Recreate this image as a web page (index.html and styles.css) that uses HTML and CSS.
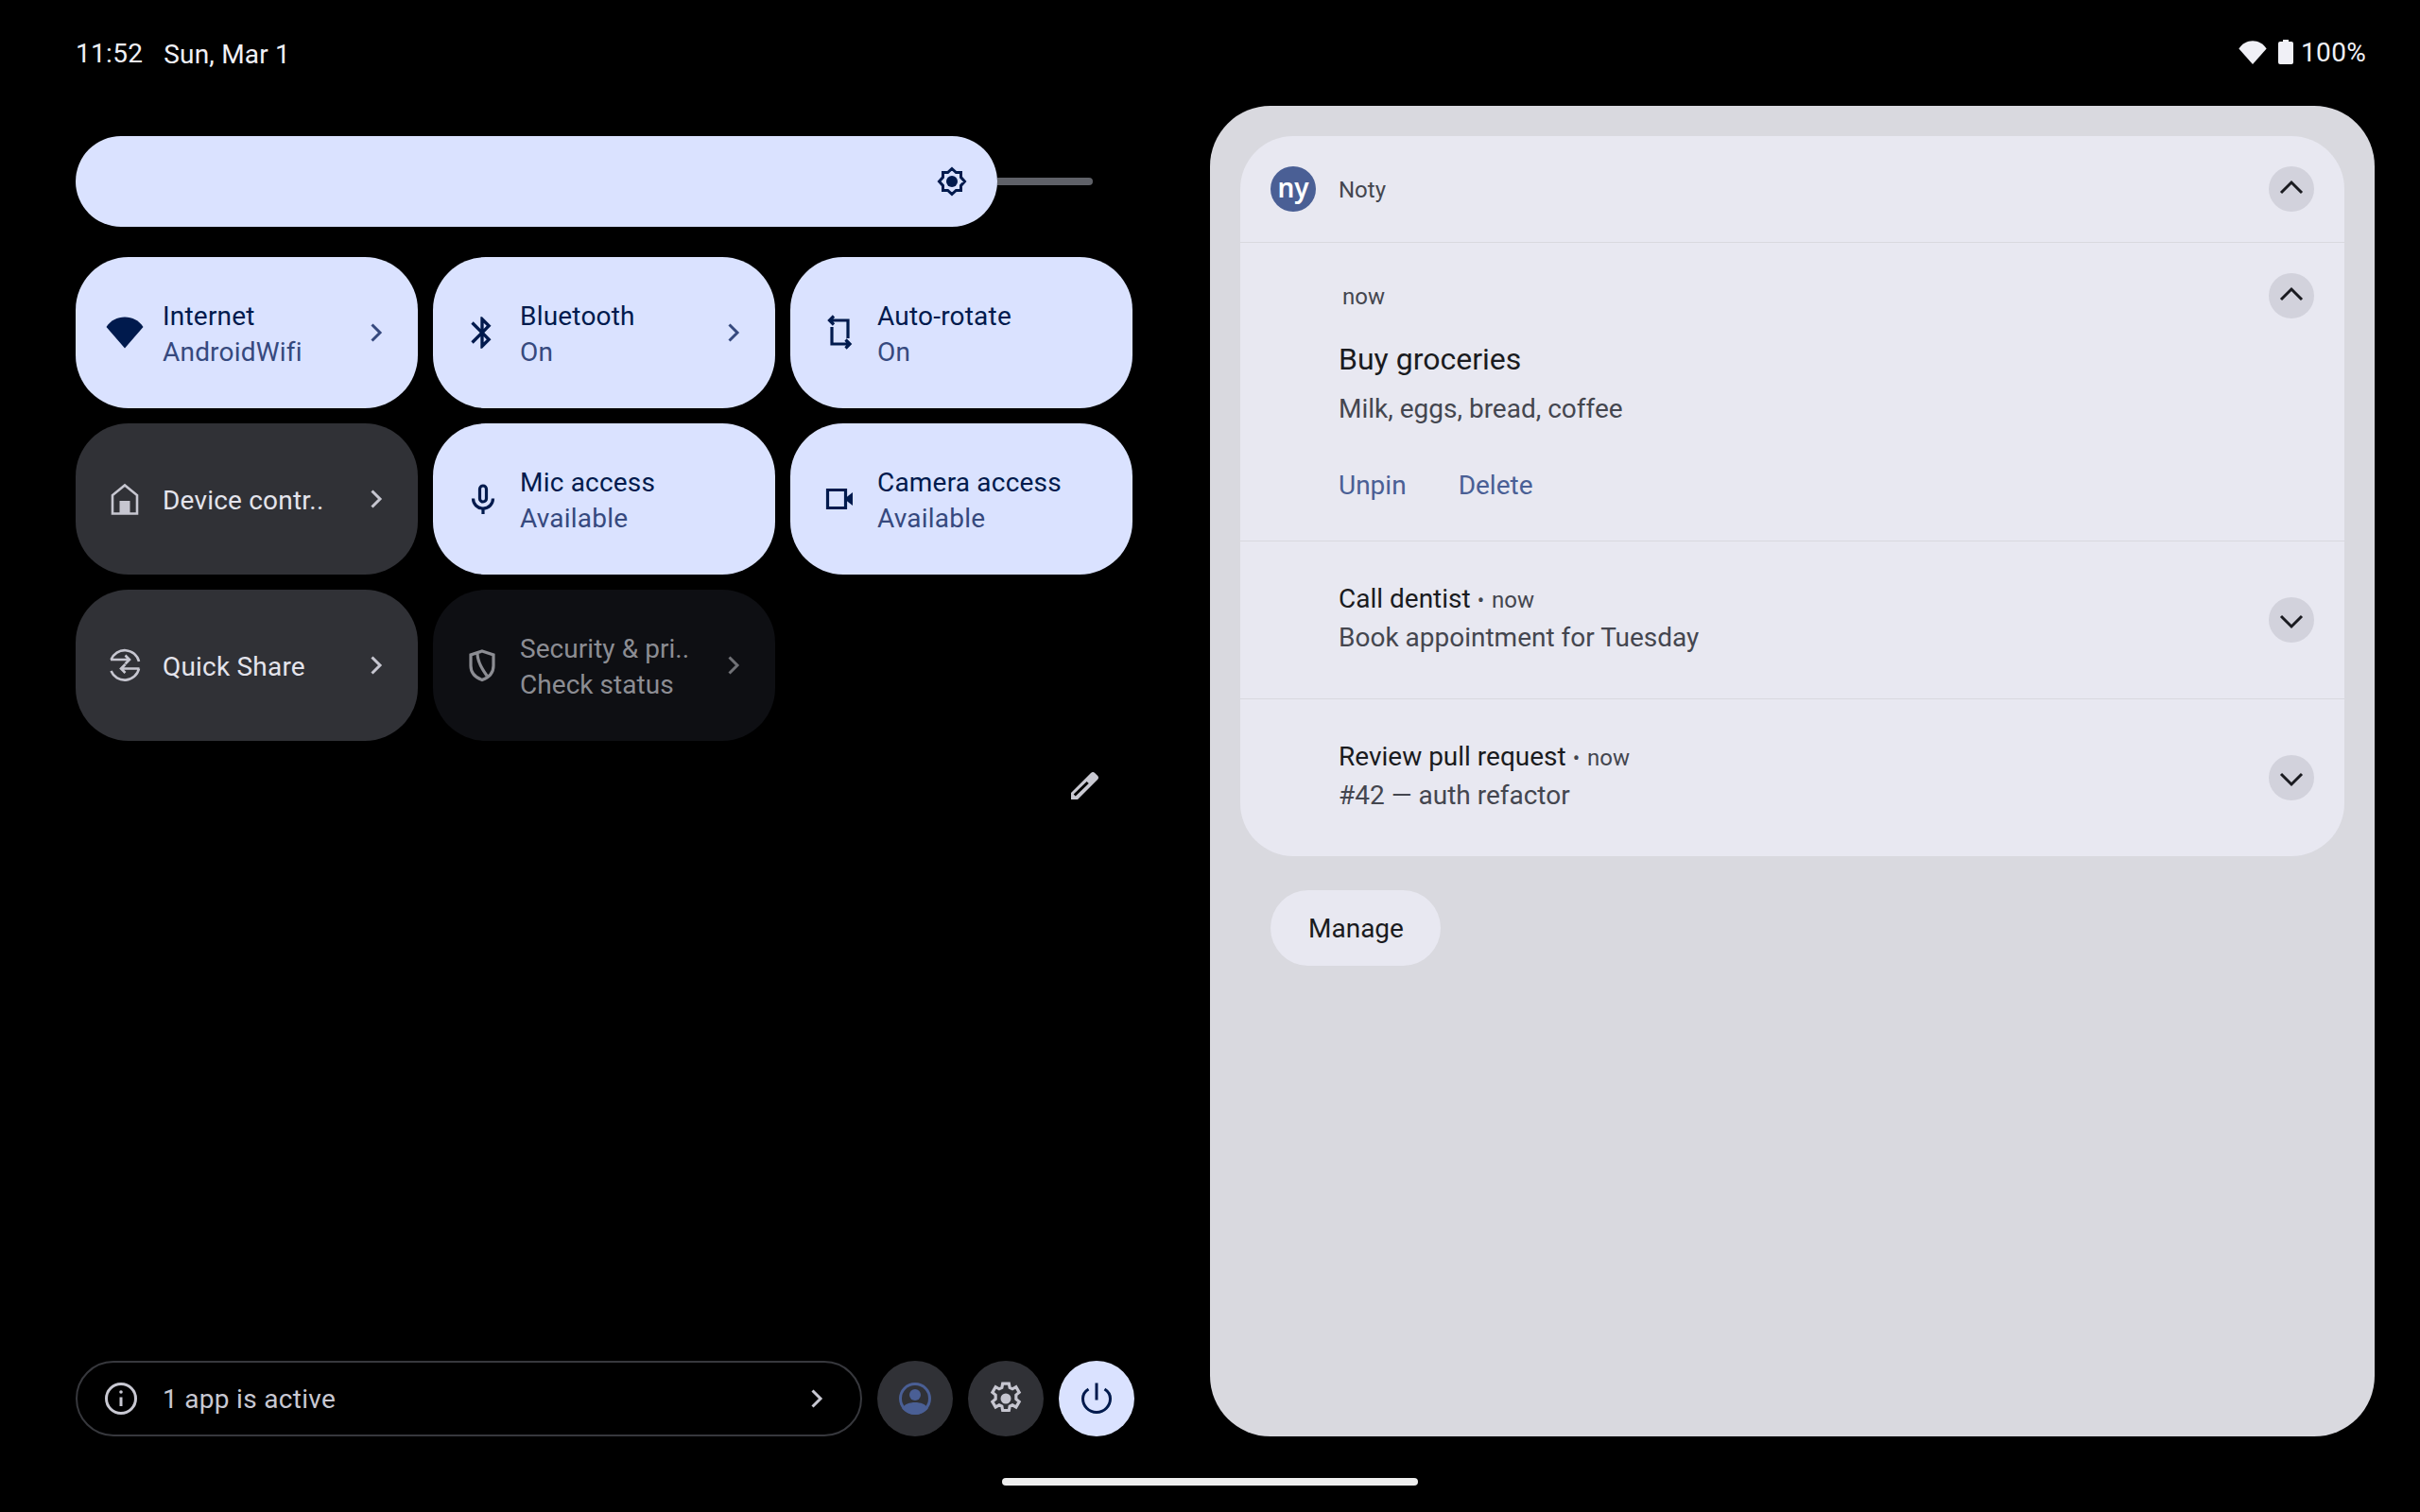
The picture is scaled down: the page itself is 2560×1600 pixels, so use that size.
FILE: index.html
```html
<!DOCTYPE html>
<html lang="en">
<head>
    <meta charset="UTF-8">
    <title>Quick settings</title>
    <link rel="stylesheet" href="styles.css">
</head>
<body>
    <div class="screen">
        <div class="status-bar">
            <div class="clock">
                <span class="time">11:52</span>
                <span class="date">Sun, Mar 1</span>
            </div>
            <div class="status-icons">
                <svg class="st-wifi" width="30" height="25" viewBox="0 0 40 33"><path d="M20 33L.5 11C5 4 12 0 20 0s15 4 19.5 11z"/></svg>
                <svg class="st-battery" width="16" height="26" viewBox="0 0 16 26"><path d="M5 0h6v2h3a2 2 0 0 1 2 2v20a2 2 0 0 1-2 2H2a2 2 0 0 1-2-2V4a2 2 0 0 1 2-2h3z"/></svg>
                <span class="battery-pct">100%</span>
            </div>
        </div>

        <div class="main">
            <div class="quick-settings">
                <div class="brightness">
                    <div class="brightness-fill">
                        <svg class="icon" width="32" height="32" viewBox="0 0 32 32"><path class="stroke" d="M16 2.500l4.400 4h5.100v5.100l4 4.400-4 4.400v5.100h-5.100l-4.400 4-4.400-4H6.500v-5.100l-4-4.400 4-4.400V6.500h5.100z"/><circle cx="16" cy="16" r="6"/></svg>
                    </div>
                    <div class="brightness-track"></div>
                </div>

                <div class="tiles">
                    <div class="tile on">
                        <svg class="tile-icon" viewBox="0 0 40 40"><path d="M20 36.5L.5 14C5 7 12 3.5 20 3.5S35 7 39.5 14z"/></svg>
                        <div class="tile-text"><div class="tile-label">Internet</div><div class="tile-sub">AndroidWifi</div></div>
                        <svg class="tile-chevron" viewBox="0 0 24 24"><path d="M7.500 3.500l8.500 8.500-8.500 8.500"/></svg>
                    </div>
                    <div class="tile on">
                        <svg class="tile-icon" viewBox="0 0 24 24"><path d="M17.71 7.71L12 2h-1v7.59L6.41 5 5 6.41 10.59 12 5 17.59 6.41 19 11 14.41V22h1l5.71-5.71-4.3-4.29 4.3-4.29zM13 5.83l1.88 1.88L13 9.59V5.83zm1.88 10.46L13 18.17v-3.76l1.88 1.88z"/></svg>
                        <div class="tile-text"><div class="tile-label">Bluetooth</div><div class="tile-sub">On</div></div>
                        <svg class="tile-chevron" viewBox="0 0 24 24"><path d="M7.500 3.500l8.500 8.500-8.500 8.500"/></svg>
                    </div>
                    <div class="tile on">
                        <svg class="tile-icon" viewBox="0 0 40 40"><path class="stroke" d="M10.500 7H29v19M12 14v18h18.500M14 2.500L9.500 7l4.500 4.500M26.500 27.500L31 32l-4.500 4.500"/></svg>
                        <div class="tile-text"><div class="tile-label">Auto-rotate</div><div class="tile-sub">On</div></div>
                    </div>

                    <div class="tile off">
                        <svg class="tile-icon" viewBox="0 0 40 40"><path class="stroke thin" d="M7 35.5V16L20 5.5 33 16v19.500z"/><path d="M14.5 22h11v14h-11z"/></svg>
                        <div class="tile-text"><div class="tile-label">Device contr..</div></div>
                        <svg class="tile-chevron" viewBox="0 0 24 24"><path d="M7.500 3.500l8.500 8.500-8.500 8.500"/></svg>
                    </div>
                    <div class="tile on">
                        <svg class="tile-icon" viewBox="-1 0 40 40"><path class="stroke" d="M20 6a3.500 3.500 0 0 1 3.500 3.500v10a3.500 3.500 0 0 1-7 0v-10A3.500 3.500 0 0 1 20 6zM9.500 19.500c0 6 4.500 10.500 10.500 10.500s10.500-4.500 10.500-10.500M20 30v6"/></svg>
                        <div class="tile-text"><div class="tile-label">Mic access</div><div class="tile-sub">Available</div></div>
                    </div>
                    <div class="tile on">
                        <svg class="tile-icon" viewBox="0 0 40 40"><path class="stroke" d="M7.500 10.500h19v19h-19z"/><path d="M34 13v14l-7-5.500v-3z"/></svg>
                        <div class="tile-text"><div class="tile-label">Camera access</div><div class="tile-sub">Available</div></div>
                    </div>

                    <div class="tile off">
                        <svg class="tile-icon" viewBox="0 0 40 40"><path class="stroke thin" d="M5.500 14A15.500 15.500 0 0 1 35 16M35 23.500A15.500 15.500 0 0 1 5.500 26M5 14H25M20.500 9.500L25 14l-4.500 4.500M35.500 23.500H16M20.500 19L16 23.500l4.500 4.500"/></svg>
                        <div class="tile-text"><div class="tile-label">Quick Share</div></div>
                        <svg class="tile-chevron" viewBox="0 0 24 24"><path d="M7.500 3.500l8.500 8.500-8.500 8.500"/></svg>
                    </div>
                    <div class="tile disabled">
                        <svg class="tile-icon" viewBox="0 0 40 40"><path class="stroke" d="M20 5l12 4v11.500C32 28 27 33 20 35.500 13 33 8 28 8 20.500V9zM15 7c0 8 4 16 10 24"/></svg>
                        <div class="tile-text"><div class="tile-label">Security &amp; pri..</div><div class="tile-sub">Check status</div></div>
                        <svg class="tile-chevron" viewBox="0 0 24 24"><path d="M7.500 3.500l8.500 8.500-8.500 8.500"/></svg>
                    </div>
                </div>

                <div class="edit-row">
                    <svg class="edit-icon" width="36" height="36" viewBox="0 0 36 36"><path d="M3 32v-7L24 4a3 3 0 0 1 4.200 0l2.800 2.800a3 3 0 0 1 0 4.200L10 32z"/><path class="slit" d="M6.700 27.500L20.700 14"/></svg>
                </div>

                <div class="footer">
                    <div class="security-pill">
                        <svg class="pill-icon" viewBox="0 0 36 36"><circle class="stroke" cx="18" cy="18" r="15.5"/><path class="stroke" d="M18 16.500V26"/><circle cx="18" cy="11" r="1.800"/></svg>
                        <span class="pill-text">1 app is active</span>
                        <svg class="pill-chevron" viewBox="0 0 24 24"><path d="M7.500 3.500l8.500 8.500-8.500 8.500"/></svg>
                    </div>
                    <div class="round-btn dark">
                        <svg class="user-icon" width="34" height="34" viewBox="0 0 34 34"><circle cx="17" cy="17" r="17"/><circle class="cut" cx="17" cy="17" r="14"/><circle cx="17" cy="13" r="6"/><path d="M3 27c3-4 8-6 14-6s11 2 14 6c-3 4-8 7-14 7S6 31 3 27z"/></svg>
                    </div>
                    <div class="round-btn dark">
                        <svg class="gear-icon" width="40" height="40" viewBox="0 0 24 24"><path class="stroke" d="M10 2.500h4l.5 2.600 1.700.8 2.300-1.300 2 3.400-2 1.700v2.600l2 1.700-2 3.400-2.300-1.300-1.700.8-.5 2.600h-4l-.5-2.600-1.700-.8-2.300 1.300-2-3.400 2-1.700v-2.600l-2-1.700 2-3.400 2.300 1.300 1.700-.8z"/><circle cx="12" cy="12" r="3.300"/></svg>
                    </div>
                    <div class="round-btn light">
                        <svg class="power-icon" width="40" height="40" viewBox="0 0 40 40"><path d="M20 3.500v18M11.500 10C7.500 12.500 5.500 16 5.500 20a14.500 14.500 0 0 0 29 0c0-4-2-7.500-6-10"/></svg>
                    </div>
                </div>
            </div>

            <div class="shade">
                <div class="notif-card">
                    <div class="notif-header">
                        <div class="app-badge">ny</div>
                        <span class="app-name">Noty</span>
                        <div class="expand-btn"><svg viewBox="0 0 28 28"><path d="M3 18l11-11 11 11"/></svg></div>
                    </div>
                    <div class="notif-row expanded">
                        <div class="notif-body">
                            <div class="when">now</div>
                            <div class="notif-big-title">Buy groceries</div>
                            <div class="notif-text">Milk, eggs, bread, coffee</div>
                            <div class="notif-actions"><span>Unpin</span><span>Delete</span></div>
                        </div>
                        <div class="expand-btn"><svg viewBox="0 0 28 28"><path d="M3 18l11-11 11 11"/></svg></div>
                    </div>
                    <div class="notif-row compact">
                        <div class="notif-body">
                            <div class="notif-title">Call dentist <span class="meta"><span class="dot">•</span> now</span></div>
                            <div class="notif-text">Book appointment for Tuesday</div>
                        </div>
                        <div class="expand-btn"><svg viewBox="0 0 28 28"><path d="M3 10l11 11 11-11"/></svg></div>
                    </div>
                    <div class="notif-row compact">
                        <div class="notif-body">
                            <div class="notif-title">Review pull request <span class="meta"><span class="dot">•</span> now</span></div>
                            <div class="notif-text">#42 — auth refactor</div>
                        </div>
                        <div class="expand-btn"><svg viewBox="0 0 28 28"><path d="M3 10l11 11 11-11"/></svg></div>
                    </div>
                </div>
                <div class="manage-btn">Manage</div>
            </div>
        </div>

        <div class="nav-area"><div class="home-bar"></div></div>
    </div>
</body>
</html>
```

FILE: styles.css
```css
* {
    box-sizing: border-box;
}
body {
    margin: 0;
    background: #000;
    font-family: Roboto, "Liberation Sans", sans-serif;
    font-size: 28px;
    overflow: hidden;
}
svg {
    display: block;
    flex: none;
}
.screen {
    display: flex;
    flex-direction: column;
    height: 1600px;
}

/* status bar */
.status-bar {
    display: flex;
    justify-content: space-between;
    height: 112px;
    padding: 39px 48px 0 80px;
    color: #f0f0f6;
    letter-spacing: 0.3px;
}
.clock {
    display: flex;
    align-items: flex-start;
    gap: 22px;
}
.time {
    margin-top: 1px;
}
.date {
    margin-top: 2px;
    letter-spacing: 0.2px;
}
.status-icons {
    display: flex;
    align-items: flex-start;
    padding-right: 9px;
}
.status-icons svg {
    fill: #f0f0f6;
}
.st-wifi {
    margin-top: 4px;
}
.st-battery {
    margin: 3px 0 0 12px;
}
.battery-pct {
    margin-left: 8px;
}

/* left column */
.main {
    display: flex;
    height: 1408px;
    padding: 0 48px 0 80px;
}
.quick-settings {
    display: flex;
    flex-direction: column;
    width: 1120px;
    margin-right: 80px;
    padding-top: 32px;
}
.brightness {
    display: flex;
    align-items: center;
}
.brightness-fill {
    display: flex;
    align-items: center;
    justify-content: flex-end;
    width: 975px;
    height: 96px;
    padding-right: 32px;
    background: #dae2ff;
    border-radius: 48px;
}
.brightness-fill .icon {
    fill: #001a4d;
}
.brightness-fill .stroke {
    fill: none;
    stroke: #001a4d;
    stroke-width: 3;
}
.brightness-track {
    width: 101px;
    height: 8px;
    background: #5f6168;
    border-radius: 0 4px 4px 0;
}

.tiles {
    display: grid;
    grid-template-columns: repeat(3, 362px);
    grid-auto-rows: 160px;
    gap: 16px;
    margin-top: 32px;
}
.tile {
    display: flex;
    align-items: center;
    padding: 0 32px;
    border-radius: 56px;
    letter-spacing: 0.2px;
}
.tile.on {
    background: #dae2ff;
    color: #001a4d;
}
.tile.off {
    background: #303136;
    color: #e4e4ec;
}
.tile.disabled {
    background: #0e0f13;
    color: #8c8d93;
    letter-spacing: 0.05px;
}
.tile-icon {
    width: 40px;
    height: 40px;
    margin-right: 20px;
    fill: currentColor;
}
.tile-icon .stroke {
    fill: none;
    stroke: currentColor;
    stroke-width: 3.2;
}
.tile-icon .thin {
    stroke-width: 2.6;
}
.tile.off .tile-icon {
    color: #c6c6d0;
}
.tile-text {
    flex: 1;
    min-width: 0;
    padding-top: 3px;
    white-space: nowrap;
}
.tile-label {
    line-height: 38px;
}
.tile-sub {
    line-height: 38px;
    color: #36497e;
}
.tile.disabled .tile-sub {
    color: #8c8d93;
}
.tile-chevron {
    width: 24px;
    height: 24px;
    fill: none;
    stroke: #36497e;
    stroke-width: 3;
}
.tile.off .tile-chevron {
    stroke: #c6c6d0;
}
.tile.disabled .tile-chevron {
    stroke: #707176;
}

.edit-row {
    display: flex;
    justify-content: flex-end;
    margin-top: 30px;
    padding-right: 34px;
}
.edit-icon {
    fill: #c9c9d2;
}
.edit-icon .slit {
    fill: none;
    stroke: #000;
    stroke-width: 3;
}

/* bottom row */
.footer {
    display: flex;
    gap: 16px;
    margin-top: auto;
}
.security-pill {
    display: flex;
    align-items: center;
    width: 832px;
    height: 80px;
    padding: 0 34px 0 28px;
    border: 2px solid #37383d;
    border-radius: 40px;
    color: #c8c8d2;
    letter-spacing: 0.3px;
}
.pill-icon {
    width: 36px;
    height: 36px;
    margin-right: 26px;
    fill: #c8c8d2;
}
.pill-icon .stroke {
    fill: none;
    stroke: #c8c8d2;
    stroke-width: 3;
}
.pill-text {
    flex: 1;
}
.pill-chevron {
    width: 24px;
    height: 24px;
    fill: none;
    stroke: #c8c8d2;
    stroke-width: 3;
}
.round-btn {
    display: flex;
    align-items: center;
    justify-content: center;
    width: 80px;
    height: 80px;
    border-radius: 50%;
}
.round-btn.dark {
    background: #303136;
}
.round-btn.light {
    background: #dae2ff;
}
.user-icon {
    fill: #4a5f95;
}
.user-icon .cut {
    fill: #303136;
}
.gear-icon {
    fill: #c6c6d0;
}
.gear-icon .stroke {
    fill: none;
    stroke: #c6c6d0;
    stroke-width: 1.9;
}
.power-icon {
    fill: none;
    stroke: #001a4d;
    stroke-width: 3;
}

/* notification shade */
.shade {
    flex: 1;
    padding: 32px;
    background: #d9d9df;
    border-radius: 64px;
}
.notif-card {
    overflow: hidden;
    background: #e8e8f1;
    border-radius: 56px;
}
.notif-header {
    display: flex;
    align-items: center;
    height: 113px;
    padding: 32px;
    border-bottom: 1px solid #d9d9df;
}
.app-badge {
    width: 48px;
    height: 48px;
    background: #4a5f95;
    border-radius: 50%;
    color: #fff;
    font-family: "Noto Sans", Roboto, sans-serif;
    font-size: 28px;
    font-weight: 600;
    line-height: 44px;
    text-align: center;
}
.app-name {
    flex: 1;
    margin: 2px 0 0 24px;
    color: #44464f;
    font-size: 24px;
}
.expand-btn {
    display: flex;
    align-items: center;
    justify-content: center;
    flex: none;
    width: 48px;
    height: 48px;
    background: #d2d2dc;
    border-radius: 50%;
}
.expand-btn svg {
    width: 28px;
    height: 28px;
    fill: none;
    stroke: #1a1b20;
    stroke-width: 3;
}
.notif-row {
    display: flex;
    justify-content: space-between;
    padding: 0 32px 0 104px;
    border-bottom: 1px solid #d9d9df;
}
.notif-row:last-child {
    border-bottom: 0;
}
.notif-row.expanded {
    height: 316px;
    padding-top: 32px;
}
.notif-row.compact {
    height: 167px;
    padding-top: 40px;
}
.notif-row.compact .expand-btn {
    margin-top: 19px;
}
.notif-row.compact:last-child {
    height: 166px;
}
.when {
    margin: 9px 0 0 4px;
    color: #44464f;
    font-size: 24px;
    line-height: 32px;
}
.notif-big-title {
    margin-top: 28px;
    color: #1a1b20;
    font-size: 32px;
    line-height: 44px;
}
.notif-text {
    color: #44464f;
    line-height: 42px;
}
.compact .notif-text {
    line-height: 36px;
}
.notif-big-title + .notif-text {
    margin-top: 10px;
}
.notif-actions {
    display: flex;
    gap: 55px;
    margin-top: 43px;
    color: #4a5f95;
}
.notif-title {
    color: #1a1b20;
    line-height: 42px;
}
.meta {
    color: #44464f;
    font-size: 24px;
}
.dot {
    margin: 0 2px 0 0;
    font-size: 22px;
}
.manage-btn {
    display: inline-block;
    height: 80px;
    margin: 36px 0 0 32px;
    padding: 0 39px 0 40px;
    background: #e8e8f1;
    border-radius: 40px;
    color: #1a1b20;
    line-height: 82px;
}

/* gesture bar */
.nav-area {
    display: flex;
    justify-content: center;
    padding-top: 44px;
}
.home-bar {
    width: 440px;
    height: 8px;
    background: #eee;
    border-radius: 4px;
}
```
